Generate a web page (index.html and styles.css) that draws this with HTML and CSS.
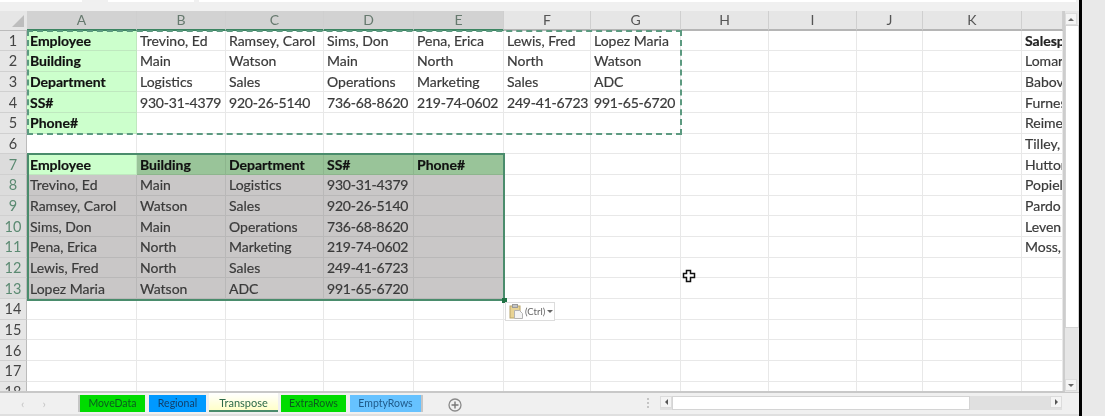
FILE: index.html
```html
<!DOCTYPE html>
<html lang="en">
<head>
    <meta charset="UTF-8">
    <title>Transpose</title>
    <link rel="stylesheet" href="styles.css">
</head>
<body>
<div class="app">
    <div class="formula-bar">
        <div class="name-box"></div>
        <div class="fx-box"></div>
        <div class="formula-input"></div>
    </div>

    <div class="work-area">
        <div class="sheet">
            <div class="corner"><i></i></div>
            <div class="col on">A</div><div class="col on">B</div><div class="col on">C</div><div class="col on">D</div><div class="col on">E</div><div class="col">F</div><div class="col">G</div><div class="col">H</div><div class="col">I</div><div class="col">J</div><div class="col">K</div><div class="col"></div>

            <div class="rownum">1</div><div class="cell src">Employee</div><div class="cell">Trevino, Ed</div><div class="cell">Ramsey, Carol</div><div class="cell">Sims, Don</div><div class="cell">Pena, Erica</div><div class="cell">Lewis, Fred</div><div class="cell">Lopez Maria</div><div class="cell"></div><div class="cell"></div><div class="cell"></div><div class="cell"></div><div class="cell bold">Salesperson</div>
            <div class="rownum">2</div><div class="cell src">Building</div><div class="cell">Main</div><div class="cell">Watson</div><div class="cell">Main</div><div class="cell">North</div><div class="cell">North</div><div class="cell">Watson</div><div class="cell"></div><div class="cell"></div><div class="cell"></div><div class="cell"></div><div class="cell">Lomar</div>
            <div class="rownum">3</div><div class="cell src">Department</div><div class="cell">Logistics</div><div class="cell">Sales</div><div class="cell">Operations</div><div class="cell">Marketing</div><div class="cell">Sales</div><div class="cell">ADC</div><div class="cell"></div><div class="cell"></div><div class="cell"></div><div class="cell"></div><div class="cell">Babov</div>
            <div class="rownum">4</div><div class="cell src">SS#</div><div class="cell num">930-31-4379</div><div class="cell num">920-26-5140</div><div class="cell num">736-68-8620</div><div class="cell num">219-74-0602</div><div class="cell num">249-41-6723</div><div class="cell num">991-65-6720</div><div class="cell"></div><div class="cell"></div><div class="cell"></div><div class="cell"></div><div class="cell">Furness</div>
            <div class="rownum">5</div><div class="cell src">Phone#</div><div class="cell"></div><div class="cell"></div><div class="cell"></div><div class="cell"></div><div class="cell"></div><div class="cell"></div><div class="cell"></div><div class="cell"></div><div class="cell"></div><div class="cell"></div><div class="cell">Reimer</div>
            <div class="rownum">6</div><div class="cell"></div><div class="cell"></div><div class="cell"></div><div class="cell"></div><div class="cell"></div><div class="cell"></div><div class="cell"></div><div class="cell"></div><div class="cell"></div><div class="cell"></div><div class="cell"></div><div class="cell">Tilley,</div>
            <div class="rownum on">7</div><div class="cell src">Employee</div><div class="cell head">Building</div><div class="cell head">Department</div><div class="cell head">SS#</div><div class="cell head">Phone#</div><div class="cell"></div><div class="cell"></div><div class="cell"></div><div class="cell"></div><div class="cell"></div><div class="cell"></div><div class="cell">Hutton</div>
            <div class="rownum on">8</div><div class="cell sel">Trevino, Ed</div><div class="cell sel">Main</div><div class="cell sel">Logistics</div><div class="cell sel num">930-31-4379</div><div class="cell sel"></div><div class="cell"></div><div class="cell"></div><div class="cell"></div><div class="cell"></div><div class="cell"></div><div class="cell"></div><div class="cell">Popiel</div>
            <div class="rownum on">9</div><div class="cell sel">Ramsey, Carol</div><div class="cell sel">Watson</div><div class="cell sel">Sales</div><div class="cell sel num">920-26-5140</div><div class="cell sel"></div><div class="cell"></div><div class="cell"></div><div class="cell"></div><div class="cell"></div><div class="cell"></div><div class="cell"></div><div class="cell">Pardo</div>
            <div class="rownum on">10</div><div class="cell sel">Sims, Don</div><div class="cell sel">Main</div><div class="cell sel">Operations</div><div class="cell sel num">736-68-8620</div><div class="cell sel"></div><div class="cell"></div><div class="cell"></div><div class="cell"></div><div class="cell"></div><div class="cell"></div><div class="cell"></div><div class="cell">Leven</div>
            <div class="rownum on">11</div><div class="cell sel">Pena, Erica</div><div class="cell sel">North</div><div class="cell sel">Marketing</div><div class="cell sel num">219-74-0602</div><div class="cell sel"></div><div class="cell"></div><div class="cell"></div><div class="cell"></div><div class="cell"></div><div class="cell"></div><div class="cell"></div><div class="cell">Moss,</div>
            <div class="rownum on">12</div><div class="cell sel">Lewis, Fred</div><div class="cell sel">North</div><div class="cell sel">Sales</div><div class="cell sel num">249-41-6723</div><div class="cell sel"></div><div class="cell"></div><div class="cell"></div><div class="cell"></div><div class="cell"></div><div class="cell"></div><div class="cell"></div><div class="cell"></div>
            <div class="rownum on">13</div><div class="cell sel">Lopez Maria</div><div class="cell sel">Watson</div><div class="cell sel">ADC</div><div class="cell sel num">991-65-6720</div><div class="cell sel"></div><div class="cell"></div><div class="cell"></div><div class="cell"></div><div class="cell"></div><div class="cell"></div><div class="cell"></div><div class="cell"></div>
            <div class="rownum">14</div><div class="cell"></div><div class="cell"></div><div class="cell"></div><div class="cell"></div><div class="cell"></div><div class="cell"></div><div class="cell"></div><div class="cell"></div><div class="cell"></div><div class="cell"></div><div class="cell"></div><div class="cell"></div>
            <div class="rownum">15</div><div class="cell"></div><div class="cell"></div><div class="cell"></div><div class="cell"></div><div class="cell"></div><div class="cell"></div><div class="cell"></div><div class="cell"></div><div class="cell"></div><div class="cell"></div><div class="cell"></div><div class="cell"></div>
            <div class="rownum">16</div><div class="cell"></div><div class="cell"></div><div class="cell"></div><div class="cell"></div><div class="cell"></div><div class="cell"></div><div class="cell"></div><div class="cell"></div><div class="cell"></div><div class="cell"></div><div class="cell"></div><div class="cell"></div>
            <div class="rownum">17</div><div class="cell"></div><div class="cell"></div><div class="cell"></div><div class="cell"></div><div class="cell"></div><div class="cell"></div><div class="cell"></div><div class="cell"></div><div class="cell"></div><div class="cell"></div><div class="cell"></div><div class="cell"></div>
            <div class="rownum">18</div><div class="cell"></div><div class="cell"></div><div class="cell"></div><div class="cell"></div><div class="cell"></div><div class="cell"></div><div class="cell"></div><div class="cell"></div><div class="cell"></div><div class="cell"></div><div class="cell"></div><div class="cell"></div>

            <div class="copy-range"></div>
            <div class="sel-range"><b class="fill-handle"></b></div>
            <div class="paste-btn">
                <svg width="14" height="15" viewBox="0 0 14 15"><rect x="1" y="2" width="10" height="12" fill="#e8d394" stroke="#b8a468"/><rect x="3.5" y="0.5" width="5" height="3" fill="#c4c4c4" stroke="#9a9a9a"/><path d="M5.5 6.5h5l3 3v5h-8z" fill="#f4f4f4" stroke="#b4b4b4"/></svg>
                <span>(Ctrl)</span><i class="caret-down"></i>
            </div>
            <svg class="cursor" width="14" height="14" viewBox="0 0 14 14"><path d="M4.5 1.5h4v3h4v4h-4v4h-4v-4h-3v-4h3z" fill="#fff" stroke="#111" stroke-width="1.5"/></svg>
        </div>

        <div class="vscroll">
            <div class="sb-btn"><i class="caret-up"></i></div>
            <div class="vthumb"></div>
            <div class="sb-btn"><i class="caret-down"></i></div>
        </div>
    </div>

    <div class="tab-bar">
        <div class="tab-nav"><span>&#8249;</span><span>&#8250;</span></div>
        <div class="tab green first">MoveData</div>
        <div class="tab blue">Regional</div>
        <div class="tab active">Transpose</div>
        <div class="tab green">ExtraRows</div>
        <div class="tab sky">EmptyRows</div>
        <div class="add-sheet">
            <svg width="14" height="14" viewBox="0 0 14 14"><circle cx="7" cy="7" r="6" fill="none" stroke="#8a8a8a" stroke-width="1.3"/><path d="M7 3.5v7M3.5 7h7" stroke="#777" stroke-width="1.4"/></svg>
        </div>
        <div class="dots"></div>
        <div class="hscroll">
            <div class="sb-btn"><i class="caret-left"></i></div>
            <div class="hthumb"></div>
            <div class="sb-btn"><i class="caret-right"></i></div>
        </div>
    </div>
    <div class="status-strip"></div>

    <div class="frame-edge"></div>
</div>
</body>
</html>
```

FILE: styles.css
```css
* {
    box-sizing: border-box;
}

html, body {
    margin: 0;
    height: 100%;
    overflow: hidden;
    background-color: #e9e9e9;
}

.app {
    position: relative;
    width: 1105px;
    height: 416px;
    padding-right: 26px;
    display: flex;
    flex-direction: column;
    font-family: Lato, "Liberation Sans", sans-serif;
    color: #333;
    filter: blur(0.55px);
}

/* formula bar, cut off by the top of the picture */
.formula-bar {
    height: 11px;
    flex: none;
    display: flex;
    background-color: #f0f0f0;
}

.formula-bar div {
    height: 2px;
    background-color: #fff;
}

.name-box {
    width: 82px;
}

.fx-box {
    width: 86px;
    margin-left: 26px;
}

.formula-input {
    width: 877px;
    margin-left: 5px;
}

.work-area {
    height: 381px;
    flex: none;
    display: flex;
    background-color: #e6e6e6;
}

.sheet {
    position: relative;
    width: 1065px;
    height: 381px;
    overflow: hidden;
    display: grid;
    grid-template-columns: 27px 110px 89px 98px 90px 90px 87px 90px 88px 88px 66px 99px 41px;
    grid-template-rows: 19.5px repeat(18, 20.67px);
    border-right: 2px solid #cdcdcd;
    border-bottom: 1px solid #c8c8c8;
}

.corner {
    background-color: #e6e6e6;
    border-bottom: 1px solid #bbb;
    position: relative;
}

.corner i {
    position: absolute;
    left: 12px;
    top: 4px;
    border-style: solid;
    border-width: 0 0 12px 12px;
    border-color: transparent transparent #bdbdbd transparent;
}

.col {
    display: flex;
    align-items: center;
    justify-content: center;
    font-size: 14px;
    color: #555;
    background-color: #e6e6e6;
    border-right: 1px solid #cfcfcf;
    border-bottom: 2px solid #b5b5b5;
}

.col.on {
    background-color: #d2d2d2;
    color: #66796e;
    border-bottom-color: #3d8562;
}

.rownum {
    display: flex;
    align-items: center;
    justify-content: center;
    font-size: 14.5px;
    color: #444;
    background-color: #e6e6e6;
    border-bottom: 1px solid #d0d0d0;
    border-right: 1px solid #bbb;
}

.rownum.on {
    background-color: #dcdcdc;
    color: #5b8a72;
}

.cell {
    display: flex;
    align-items: center;
    padding-left: 3px;
    font-size: 14px;
    white-space: nowrap;
    overflow: hidden;
    color: #3a3a3a;
    -webkit-text-stroke: 0.2px;
    background-color: #fff;
    border-right: 1px solid #e8e8e8;
    border-bottom: 1px solid #e8e8e8;
}

.cell.num {
    letter-spacing: -0.2px;
}

.cell.bold {
    font-weight: 700;
    color: #222;
}

.cell.src {
    font-weight: 700;
    color: #111;
    background-color: #ccffcc;
    border-color: #bfe8bf;
}

.cell.head {
    font-weight: 700;
    color: #111;
    background-color: #99c499;
    border-color: #8db58d;
}

.cell.sel {
    background-color: #c9c7c7;
    border-color: #b9b8b8;
}

/* selection and copy outlines sit on the grid */
.copy-range {
    position: absolute;
    grid-column: 2 / 9;
    grid-row: 2 / 7;
    inset: -1px -1px -1px 0;
    border: 2px dashed #5c9a80;
}

.sel-range {
    position: absolute;
    grid-column: 2 / 7;
    grid-row: 8 / 15;
    inset: -1px -1px -2px 0;
    border: 2px solid #4a8c6c;
}

.fill-handle {
    position: absolute;
    right: -4px;
    bottom: -4px;
    width: 5px;
    height: 5px;
    background-color: #217346;
}

.paste-btn {
    position: absolute;
    left: 505px;
    top: 291px;
    width: 50px;
    height: 19px;
    display: flex;
    align-items: center;
    gap: 2px;
    padding-left: 3px;
    font-size: 9.5px;
    color: #666;
    background-color: #fff;
    border: 1px solid #dcdcdc;
}

.cursor {
    position: absolute;
    left: 682px;
    top: 258px;
}

.caret-down, .caret-up, .caret-left, .caret-right {
    display: block;
    width: 0;
    height: 0;
    border-style: solid;
    border-color: transparent;
}

.caret-down {
    border-width: 3px 3px 0;
    border-top-color: #666;
}

.caret-up {
    border-width: 0 3px 3px;
    border-bottom-color: #666;
}

.caret-left {
    border-width: 3px 3px 3px 0;
    border-right-color: #555;
}

.caret-right {
    border-width: 3px 0 3px 3px;
    border-left-color: #555;
}

.vscroll {
    width: 14px;
    padding-top: 2px;
    display: flex;
    flex-direction: column;
    background-color: #e6e6e6;
}

.sb-btn {
    flex: none;
    width: 12px;
    height: 12px;
    display: flex;
    align-items: center;
    justify-content: center;
    background-color: #f4f4f4;
    border: 1px solid #dcdcdc;
}

.vthumb {
    height: 303px;
    margin-bottom: 51px;
    background-color: #fff;
    border: 1px solid #d4d4d4;
}

.tab-bar {
    height: 22px;
    flex: none;
    display: flex;
    align-items: flex-start;
    padding-top: 2px;
    background-color: #f0f0f0;
    border-top: 1px solid #c8c8c8;
}

.tab-nav {
    width: 80px;
    padding-left: 21px;
    display: flex;
    gap: 18px;
    font-size: 12px;
    line-height: 17px;
    color: #c4c4c4;
}

.tab {
    height: 17px;
    margin-right: 4px;
    display: flex;
    align-items: center;
    justify-content: center;
    font-size: 10.5px;
    line-height: 15px;
    padding-bottom: 1px;
    color: #1c4f33;
}

.tab.green {
    width: 65px;
    background-color: #00dc00;
    color: #0b5a1e;
}

.tab.first {
    box-shadow: -2px 0 0 #c6c6c6;
}

.tab.blue {
    width: 57px;
    background-color: #0099ff;
    color: #103f6b;
}

.tab.active {
    width: 69px;
    margin: -2px 3px 0 -1px;
    height: 19px;
    font-size: 11px;
    padding: 1px 0 0;
    background: linear-gradient(#fff, #ffffc8);
    color: #2c6a48;
    border-bottom: 2px solid #4a8c6c;
}

.tab.sky {
    width: 71px;
    background-color: #66c2ff;
    color: #1f5a8a;
    box-shadow: 2px 0 0 #c6c6c6;
}

.add-sheet {
    margin-left: 23px;
    padding-top: 1px;
    height: 14px;
}

.dots {
    width: 2px;
    height: 10px;
    margin: 3px 0 0 185px;
    border-left: 2px dotted #c4c4c4;
}

.hscroll {
    margin-left: 11px;
    width: 402px;
    height: 14px;
    display: flex;
    margin-top: 1px;
    background-color: #e0e0e0;
}

.hthumb {
    width: 298px;
    margin-right: 80px;
    background-color: #fff;
    border: 1px solid #d4d4d4;
}

.status-strip {
    flex: 1;
    background-color: #dfdfdf;
}

.frame-edge {
    position: absolute;
    left: 1079px;
    top: 0;
    width: 3px;
    height: 416px;
    background-color: #000;
}
```
